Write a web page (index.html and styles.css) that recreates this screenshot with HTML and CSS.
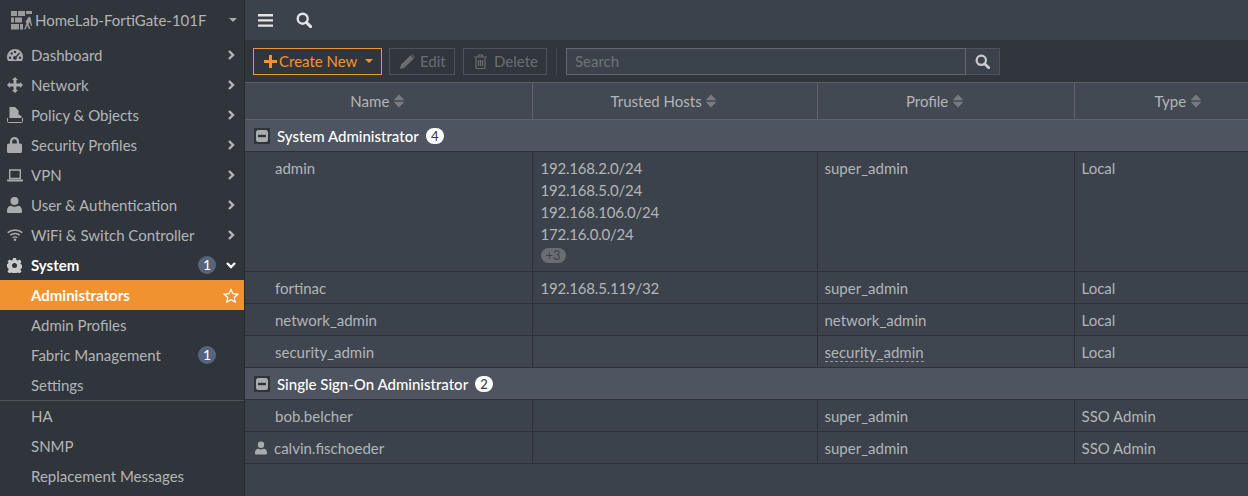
FILE: index.html
```html
<!DOCTYPE html>
<html lang="en">
<head>
<meta charset="utf-8">
<title>Administrators</title>
<link rel="stylesheet" href="styles.css">
</head>
<body>
<svg class="defs" width="0" height="0" aria-hidden="true">
  <symbol id="chev" viewBox="0 0 10 12"><path d="M3 2 7 6 3 10" fill="none" stroke="currentColor" stroke-width="2.400"/></symbol>
  <symbol id="sort" viewBox="0 0 10 14"><path d="M5 .5 9.800 5.500a.5.500 0 0 1-.4.800H.6a.5.500 0 0 1-.4-.8zM5 13.500.2 8.500a.5.500 0 0 1 .4-.8h8.800a.5.500 0 0 1 .4.800z" fill="currentColor"/></symbol>
  <symbol id="search" viewBox="0 0 16 16"><circle cx="6.700" cy="6.700" r="5" fill="none" stroke="currentColor" stroke-width="2.400"/><path d="m10.300 10.300 4.300 4.300" stroke="currentColor" stroke-width="3" stroke-linecap="round"/></symbol>
  <symbol id="minus" viewBox="0 0 16 16"><rect width="16" height="16" fill="#2f343b"/><rect x="2" y="2" width="12" height="12" rx="2.500" fill="#a9abad"/><rect x="4" y="6.800" width="8" height="2.400" fill="#2f343b"/></symbol>
</svg>
<aside class="sidebar">
  <header class="brand">
    <svg class="brand-logo" width="21" height="19" viewBox="0 0 21 19"><path fill="#9b9b9b" d="M0 0h6v5H0zM7 0h7v5H7zM15 0h6v3h-6zM0 6.500h3v5H0zM4 6.500h7v5H4zM0 13h8v5.500H0zM9 13h3v5.500H9z"/><path fill="#9b9b9b" d="M13 18.500 15.500 12.500 14.500 10.500 18 5.500l1.500 1 1 5.500.5 3h-1l-1.500-4-1 2.500 2 4.500h-1.500l-2-3.500-1.200 3.500z"/></svg>
    <span class="brand-name">HomeLab-FortiGate-101F</span>
    <span class="caret"></span>
  </header>
  <nav class="nav">
    <a class="nav-item"><span class="nav-icon"><svg width="16" height="14" viewBox="0 0 16 14"><path fill="currentColor" fill-rule="evenodd" d="M8 1a8 8 0 0 1 8 8c0 1.500-.4 2.800-1 4H1c-.6-1.200-1-2.500-1-4a8 8 0 0 1 8-8zM3 8.500a1.200 1.200 0 1 0 0 2.400 1.200 1.200 0 0 0 0-2.400zM4.700 4.200a1.200 1.200 0 1 0 0 2.400 1.200 1.200 0 0 0 0-2.400zM8 2.700a1.200 1.200 0 1 0 0 2.400 1.200 1.200 0 0 0 0-2.400zM12.200 4.500 8.600 8.200a1.800 1.800 0 1 0 1 1l3.500-3.800zM13 8.500a1.200 1.200 0 1 0 0 2.400 1.200 1.200 0 0 0 0-2.400z"/></svg></span><span class="nav-label">Dashboard</span><svg class="chev"><use href="#chev"/></svg></a>
    <a class="nav-item"><span class="nav-icon"><svg width="16" height="16" viewBox="0 0 16 16"><path fill="currentColor" d="M8 0l3 3H9.400v3.600H13V5l3 3-3 3V9.400H9.400V13H11l-3 3-3-3h1.600V9.400H3V11L0 8l3-3v1.600h3.600V3H5z"/></svg></span><span class="nav-label">Network</span><svg class="chev"><use href="#chev"/></svg></a>
    <a class="nav-item"><span class="nav-icon"><svg width="16" height="16" viewBox="0 0 16 16"><path fill="currentColor" d="M2.500 0H8l3.500 3.500V7.500l3 1.500v2H2.500z"/><path fill="none" stroke="currentColor" stroke-width="1" d="M.5 11v3.500a1 1 0 0 0 1 1h13a1 1 0 0 0 1-1V11"/></svg></span><span class="nav-label">Policy &amp; Objects</span><svg class="chev"><use href="#chev"/></svg></a>
    <a class="nav-item"><span class="nav-icon"><svg width="15" height="16" viewBox="0 0 15 16"><path fill="currentColor" fill-rule="evenodd" d="M3 6.500V4.500a4.500 4.500 0 0 1 9 0v2h1.500a1.500 1.500 0 0 1 1.500 1.500v6.500a1.500 1.500 0 0 1-1.500 1.500h-12A1.500 1.500 0 0 1 0 14.500V8a1.500 1.500 0 0 1 1.500-1.500zM5.200 6.500h4.600v-2a2.300 2.300 0 0 0-4.600 0z"/></svg></span><span class="nav-label">Security Profiles</span><svg class="chev"><use href="#chev"/></svg></a>
    <a class="nav-item"><span class="nav-icon"><svg width="16" height="13" viewBox="0 0 16 13"><path fill="none" stroke="currentColor" stroke-width="1.400" d="M2.700 1h10.600v8.500H2.700z"/><path fill="currentColor" d="M0 10.500h16v1a1 1 0 0 1-1 1H1a1 1 0 0 1-1-1z"/></svg></span><span class="nav-label">VPN</span><svg class="chev"><use href="#chev"/></svg></a>
    <a class="nav-item"><span class="nav-icon"><svg width="15" height="16" viewBox="0 0 15 16"><circle cx="7.500" cy="4" r="4" fill="currentColor"/><path fill="currentColor" d="M0 13.500C0 10.500 2 8.800 4 8.800c1 .6 2.200 1 3.500 1s2.500-.4 3.500-1c2 0 4 1.700 4 4.700V15a1 1 0 0 1-1 1H1a1 1 0 0 1-1-1z"/></svg></span><span class="nav-label">User &amp; Authentication</span><svg class="chev"><use href="#chev"/></svg></a>
    <a class="nav-item"><span class="nav-icon"><svg width="16" height="12" viewBox="0 0 16 12"><path fill="none" stroke="currentColor" stroke-width="1.500" d="M.7 3.600c4.100-3.600 10.500-3.600 14.600 0M3.200 6.300c2.700-2.400 6.900-2.400 9.600 0"/><path fill="none" stroke="currentColor" stroke-width="1.300" d="M5.600 8.700c1.400-1 3.400-1 4.800 0"/><circle cx="8" cy="10.700" r="1.200" fill="currentColor"/></svg></span><span class="nav-label">WiFi &amp; Switch Controller</span><svg class="chev"><use href="#chev"/></svg></a>
    <a class="nav-item is-open"><span class="nav-icon"><svg width="15" height="15" viewBox="0 0 15 15"><path fill="currentColor" fill-rule="evenodd" d="M6 0h3l.4 2 1.400.6 1.700-1.200 2 2-1.100 1.800.6 1.400 2 .4v3l-2 .4-.6 1.400 1.100 1.700-2 2-1.700-1.100-1.400.6-.4 2H6l-.4-2-1.400-.6-1.700 1.100-2-2 1.100-1.700L1 9.600l-2-.4v-3l2-.4.6-1.400L.5 3.400l2-2 1.700 1.200L5.600 2zM7.500 5a2.500 2.500 0 1 0 0 5 2.500 2.500 0 0 0 0-5z"/></svg></span><span class="nav-label">System</span><span class="badge">1</span><svg class="chev chev-down"><use href="#chev"/></svg></a>
    <a class="nav-item sub is-active"><span class="nav-label">Administrators</span><svg class="star" width="16" height="15" viewBox="0 0 16 15"><path fill="none" stroke="#fff" stroke-width="1.200" d="m8 1.400 2 4.300 4.700.6-3.400 3.200.9 4.600L8 11.800l-4.200 2.300.9-4.600L1.300 6.300 6 5.700z"/></svg></a>
    <a class="nav-item sub"><span class="nav-label">Admin Profiles</span></a>
    <a class="nav-item sub"><span class="nav-label">Fabric Management</span><span class="badge badge-end">1</span></a>
    <a class="nav-item sub"><span class="nav-label">Settings</span></a>
    <div class="nav-divider"></div>
    <a class="nav-item sub"><span class="nav-label">HA</span></a>
    <a class="nav-item sub"><span class="nav-label">SNMP</span></a>
    <a class="nav-item sub"><span class="nav-label">Replacement Messages</span></a>
  </nav>
</aside>
<main class="main">
  <div class="topbar">
    <svg class="top-icon" width="15" height="13" viewBox="0 0 15 13"><path fill="#e4e4e4" d="M0 0h15v2.400H0zM0 5.200h15v2.400H0zM0 10.400h15v2.400H0z"/></svg>
    <svg class="top-icon top-search"><use href="#search"/></svg>
  </div>
  <div class="toolbar">
    <button class="btn btn-create"><svg width="13" height="13" viewBox="0 0 13 13"><path fill="currentColor" d="M5 0h3v5h5v3H8v5H5V8H0V5h5z"/></svg><span>Create New</span><span class="caret caret-orange"></span></button>
    <button class="btn btn-disabled"><svg width="15" height="15" viewBox="0 0 15 15"><path fill="currentColor" d="M0 15l1-4.200L10.500 1.300l3.200 3.200L4.200 14zM11.300.5l.7-.5 3 3-.6.700z"/></svg><span>Edit</span></button>
    <button class="btn btn-disabled btn-delete"><svg width="13" height="15" viewBox="0 0 13 15"><path fill="none" stroke="currentColor" stroke-width="1.200" d="M2 4v9.500a1 1 0 0 0 1 1h7a1 1 0 0 0 1-1V4M0 3h13M4.500 3V1h4v2M4.500 6v6M6.500 6v6M8.500 6v6"/></svg><span>Delete</span></button>
    <span class="tool-sep"></span>
    <div class="search">
      <input class="search-input" type="text" placeholder="Search">
      <button class="search-btn"><svg class="search-glyph"><use href="#search"/></svg></button>
    </div>
  </div>
  <table class="grid">
    <colgroup><col class="c-name"><col class="c-hosts"><col class="c-profile"><col class="c-type"></colgroup>
    <thead>
      <tr><th>Name <svg class="sort"><use href="#sort"/></svg></th><th>Trusted Hosts <svg class="sort"><use href="#sort"/></svg></th><th>Profile <svg class="sort"><use href="#sort"/></svg></th><th>Type <svg class="sort"><use href="#sort"/></svg></th></tr>
    </thead>
    <tbody>
      <tr class="group"><td colspan="4"><div class="group-in"><svg class="minus"><use href="#minus"/></svg><span>System Administrator</span><span class="count">4</span></div></td></tr>
      <tr class="tall">
        <td class="name">admin</td>
        <td class="ip"><div class="host">192.168.2.0/24</div><div class="host">192.168.5.0/24</div><div class="host">192.168.106.0/24</div><div class="host">172.16.0.0/24</div><span class="more">+3</span></td>
        <td>super_admin</td><td>Local</td>
      </tr>
      <tr><td class="name">fortinac</td><td class="ip">192.168.5.119/32</td><td>super_admin</td><td>Local</td></tr>
      <tr><td class="name">network_admin</td><td></td><td>network_admin</td><td>Local</td></tr>
      <tr class="hover"><td class="name">security_admin</td><td></td><td><span class="dashed">security_admin</span></td><td>Local</td></tr>
      <tr class="group"><td colspan="4"><div class="group-in"><svg class="minus"><use href="#minus"/></svg><span>Single Sign-On Administrator</span><span class="count">2</span></div></td></tr>
      <tr><td class="name">bob.belcher</td><td></td><td>super_admin</td><td>SSO Admin</td></tr>
      <tr><td class="name name-user"><svg class="user-glyph" width="12" height="14" viewBox="0 0 15 16"><circle cx="7.500" cy="4" r="4" fill="currentColor"/><path fill="currentColor" d="M0 13.500C0 10.500 2 8.800 4 8.800c1 .6 2.200 1 3.500 1s2.500-.4 3.500-1c2 0 4 1.700 4 4.700V15a1 1 0 0 1-1 1H1a1 1 0 0 1-1-1z"/></svg>calvin.fischoeder</td><td></td><td>super_admin</td><td>SSO Admin</td></tr>
    </tbody>
  </table>
</main>
</body>
</html>
```
FILE: styles.css
```css
* { box-sizing: border-box; }
html, body { height: 100%; }
body {
  margin: 0;
  display: flex;
  overflow: hidden;
  font-family: "Lato", "Liberation Sans", sans-serif;
  font-size: 15px;
  color: #b3b5b7;
  background: #3c424b;
}
.defs { position: absolute; }

.sidebar {
  width: 245px;
  flex: none;
  background: #30343b;
  border-right: 1px solid #262a2f;
  overflow: hidden;
}
.brand {
  height: 40px;
  display: flex;
  align-items: center;
  padding-left: 11px;
  color: #b3b5b7;
}
.brand-logo { flex: none; margin-right: 3px; }
.brand-name { flex: 1; font-size: 15px; }
.caret {
  width: 0;
  height: 0;
  margin-right: 7px;
  border-left: 4px solid transparent;
  border-right: 4px solid transparent;
  border-top: 4px solid #a9abad;
}
.nav { display: flex; flex-direction: column; }
.nav-item {
  height: 30px;
  flex: none;
  display: flex;
  align-items: center;
  padding-left: 7px;
  color: #b3b5b7;
}
.nav-icon {
  width: 24px;
  flex: none;
  display: flex;
  align-items: center;
  color: #a9abad;
}
.nav-label { flex: 1; white-space: nowrap; }
.chev { width: 10px; height: 12px; flex: none; margin-right: 8px; color: #b3b5b7; }
.chev-down { transform: rotate(90deg); color: #fff; }
.is-open { color: #fff; font-weight: 700; }
.is-open .nav-icon { color: #c9cacb; }
.sub { padding-left: 31px; }
.is-active { background: #f09230; color: #fff; font-weight: 700; }
.star { flex: none; margin-right: 5px; }
.badge {
  width: 18px;
  height: 18px;
  flex: none;
  margin-right: 10px;
  border-radius: 50%;
  background: #56657a;
  color: #fff;
  font-size: 14px;
  font-weight: 400;
  line-height: 18px;
  text-align: center;
}
.badge-end { margin-right: 28px; }
.nav-divider { height: 1px; flex: none; background: #4f5256; }

.main { flex: 1; min-width: 0; display: flex; flex-direction: column; }
.topbar {
  height: 40px;
  flex: none;
  display: flex;
  align-items: center;
  padding-left: 13px;
  background: #3c424b;
}
.top-icon { flex: none; }
.top-search { width: 16px; height: 16px; margin-left: 23px; color: #e4e4e4; }
.toolbar {
  height: 43px;
  flex: none;
  display: flex;
  align-items: center;
  padding: 1px 0 0 8px;
  background: #31363d;
  border-bottom: 1px solid #5b5f64;
}
.btn {
  height: 27px;
  display: flex;
  align-items: center;
  padding: 0 0 1px;
  background: #3c424b;
  border: 1px solid #4e5359;
  font: inherit;
}
.btn-create {
  width: 129px;
  padding-left: 10px;
  border-color: #f29431;
  background: #31363d;
  color: #f29431;
}
.btn-create span:first-of-type { margin-left: 2px; }
.caret-orange { margin: 0 0 0 8px; border-top-color: #f29431; }
.btn-disabled {
  margin-left: 7px;
  width: 66px;
  padding-left: 10px;
  gap: 5px;
  background: #31363d;
  color: #6a6e73;
}
.btn-delete { margin-left: 8px; width: 84px; gap: 7px; }
.tool-sep { width: 1px; height: 27px; margin: 0 9px; background: #44484e; }
.search { display: flex; height: 27px; }
.search-input {
  width: 400px;
  height: 27px;
  padding: 0 8px 1px;
  background: #3c424b;
  border: 1px solid #64686c;
  color: #b3b5b7;
  font: inherit;
  outline: none;
}
.search-input::placeholder { color: #6f7377; opacity: 1; }
.search-btn {
  width: 34px;
  height: 27px;
  padding: 0;
  display: flex;
  align-items: center;
  justify-content: center;
  background: #3c424b;
  border: 1px solid #4e5359;
  border-left: 0;
}
.search-glyph { width: 15px; height: 15px; color: #c9cacb; }

.grid { width: 1058px; flex: none; border-collapse: collapse; table-layout: fixed; }
.c-name { width: 287px; }
.c-hosts { width: 285px; }
.c-profile { width: 257px; }
.c-type { width: 229px; }
th {
  height: 36px;
  padding: 0 22px 0 0;
  background: #434953;
  border-bottom: 1px solid #5f636a;
  border-right: 1px solid #5f636a;
  color: #b3b5b7;
  font-weight: 400;
  text-align: center;
}
th:last-child { border-right: 0; }
.sort { width: 10px; height: 14px; color: #777b81; vertical-align: -1px; margin-left: 1px; }
td {
  height: 32px;
  padding: 2px 7px 0;
  background: #3c424b;
  border-bottom: 1px solid #2e3238;
  border-right: 1px solid #2e3238;
  vertical-align: middle;
}
td:last-child { border-right: 0; }
.tall td { height: 120px; padding-top: 5px; vertical-align: top; line-height: 22px; }
.host { height: 22px; line-height: 22px; }
td.ip { padding-left: 8px; letter-spacing: -0.2px; }
.more {
  display: block;
  width: 25px;
  height: 15px;
  margin-top: 3px;
  border-radius: 8px;
  background: #6a6e73;
  color: #3c424b;
  font-size: 13px;
  line-height: 15px;
  text-align: center;
  letter-spacing: 0;
}
td.name { padding-left: 30px; }
td.name-user { padding-left: 10px; }
.user-glyph { margin-right: 7px; vertical-align: -1px; color: #a9abad; }
.hover td { background: #3f4650; }
.dashed { border-bottom: 1px dashed #9a9c9f; }
.group td { background: #4f5560; border-right: 0; padding: 1px 9px 0; color: #fff; }
.group-in { display: flex; align-items: center; font-weight: 500; }
.minus { width: 16px; height: 16px; flex: none; margin-right: 7px; }
.count {
  width: 18px;
  height: 16px;
  margin-left: 7px;
  border-radius: 8px;
  background: #fff;
  color: #3c424b;
  font-size: 13px;
  line-height: 16px;
  text-align: center;
}
```
